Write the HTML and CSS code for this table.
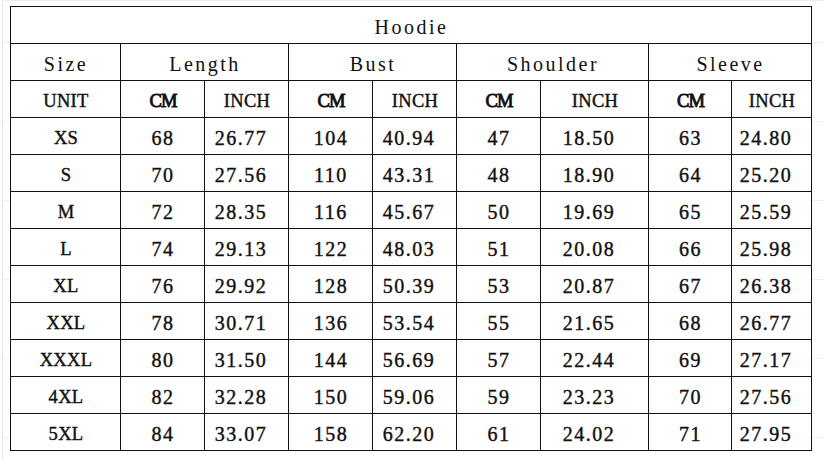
FILE: index.html
```html
<!DOCTYPE html>
<html>
<head>
<meta charset="utf-8">
<link rel="stylesheet" href="styles.css">
</head>
<body>
<div class="sheet">
<table class="size-table">
  <colgroup>
    <col class="c-size"><col class="c84"><col class="c84"><col class="c84"><col class="c84"><col class="c84"><col class="c108"><col class="c83"><col class="c80">
  </colgroup>
  <tr><td class="title" colspan="9">Hoodie</td></tr>
  <tr class="head">
    <td>Size</td><td colspan="2">Length</td><td colspan="2">Bust</td><td colspan="2">Shoulder</td><td colspan="2">Sleeve</td>
  </tr>
  <tr class="units">
    <td>UNIT</td><td class="cm">CM</td><td>INCH</td><td class="cm">CM</td><td>INCH</td><td class="cm">CM</td><td>INCH</td><td class="cm">CM</td><td>INCH</td>
  </tr>
  <tr><td>XS</td><td>68</td><td class="dec">26.77</td><td>104</td><td class="dec">40.94</td><td>47</td><td class="dec">18.50</td><td>63</td><td class="dec">24.80</td></tr>
  <tr><td>S</td><td>70</td><td class="dec">27.56</td><td>110</td><td class="dec">43.31</td><td>48</td><td class="dec">18.90</td><td>64</td><td class="dec">25.20</td></tr>
  <tr><td>M</td><td>72</td><td class="dec">28.35</td><td>116</td><td class="dec">45.67</td><td>50</td><td class="dec">19.69</td><td>65</td><td class="dec">25.59</td></tr>
  <tr><td>L</td><td>74</td><td class="dec">29.13</td><td>122</td><td class="dec">48.03</td><td>51</td><td class="dec">20.08</td><td>66</td><td class="dec">25.98</td></tr>
  <tr><td>XL</td><td>76</td><td class="dec">29.92</td><td>128</td><td class="dec">50.39</td><td>53</td><td class="dec">20.87</td><td>67</td><td class="dec">26.38</td></tr>
  <tr><td>XXL</td><td>78</td><td class="dec">30.71</td><td>136</td><td class="dec">53.54</td><td>55</td><td class="dec">21.65</td><td>68</td><td class="dec">26.77</td></tr>
  <tr><td>XXXL</td><td>80</td><td class="dec">31.50</td><td>144</td><td class="dec">56.69</td><td>57</td><td class="dec">22.44</td><td>69</td><td class="dec">27.17</td></tr>
  <tr><td>4XL</td><td>82</td><td class="dec">32.28</td><td>150</td><td class="dec">59.06</td><td>59</td><td class="dec">23.23</td><td>70</td><td class="dec">27.56</td></tr>
  <tr><td>5XL</td><td>84</td><td class="dec">33.07</td><td>158</td><td class="dec">62.20</td><td>61</td><td class="dec">24.02</td><td>71</td><td class="dec">27.95</td></tr>
</table>
</div>
</body>
</html>
```

FILE: styles.css
```css
html, body {
  margin: 0;
  padding: 0;
  background: #ffffff;
}

.sheet {
  width: 824px;
  height: 459px;
  box-sizing: border-box;
  padding: 6px 0 0 9px;
  border-left: 1px solid #e4e4e4;
  margin-left: 2px;
  border-top: 1px solid #ececec;
  background-image: repeating-linear-gradient(to bottom, transparent 0, transparent 41px, #f0f0f0 41px, #f0f0f0 42px, transparent 42px, transparent 79px);
  background-position: 0 0;
}

.size-table {
  border-collapse: collapse;
  table-layout: fixed;
  width: 802px;
  background: #ffffff;
  font-family: "Liberation Serif", "DejaVu Serif", serif;
  font-size: 20px;
  letter-spacing: 1.5px;
  color: #111;
  margin-left: -2px;
  margin-top: -1px;
}

.c-size { width: 110px; }
.c84 { width: 84px; }
.c108 { width: 108px; }
.c83 { width: 83px; }
.c80 { width: 80px; }

.size-table td {
  border: 1px solid #111;
  height: 37px;
  padding: 3px 0 0 1px;
  text-align: center;
  vertical-align: middle;
  font-weight: normal;
  line-height: 20px;
  box-sizing: border-box;
  -webkit-text-stroke: 0.4px #111;
}

.size-table td:first-child,
.size-table .units td {
  font-size: 18.5px;
  letter-spacing: 0.3px;
}

.size-table .units td.cm {
  letter-spacing: -1px;
  -webkit-text-stroke: 0.9px #111;
}

.size-table td.title,
.size-table .head td {
  font-size: 20px;
  letter-spacing: 2.5px;
  -webkit-text-stroke: 0;
}

.size-table td.dec {
  padding-right: 12px;
}
```
